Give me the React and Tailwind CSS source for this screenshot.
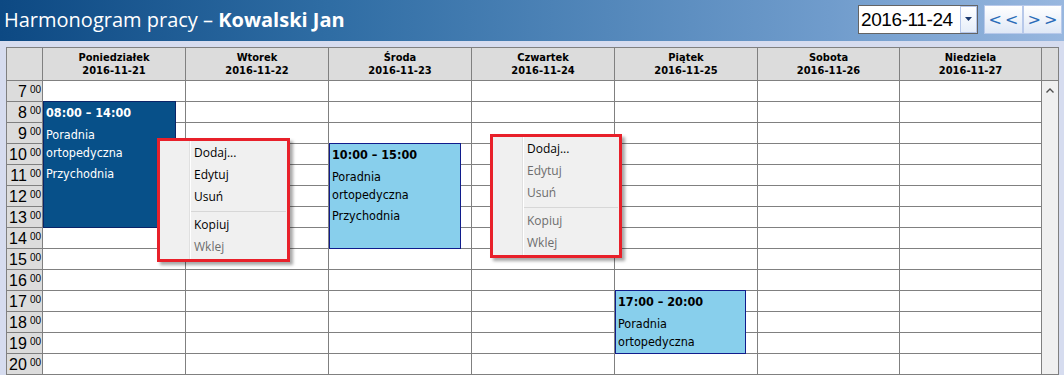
import React from "react";

const days = [
  ["Poniedziałek", "2016-11-21"],
  ["Wtorek", "2016-11-22"],
  ["Środa", "2016-11-23"],
  ["Czwartek", "2016-11-24"],
  ["Piątek", "2016-11-25"],
  ["Sobota", "2016-11-26"],
  ["Niedziela", "2016-11-27"],
];

const hours = [7, 8, 9, 10, 11, 12, 13, 14, 15, 16, 17, 18, 19, 20];

const events = {
  0: [{ start: 8, end: 14, time: "08:00 – 14:00", lines: ["Poradnia ortopedyczna", "Przychodnia"], dark: true, w: 133 }],
  2: [{ start: 10, end: 15, time: "10:00 – 15:00", lines: ["Poradnia ortopedyczna", "Przychodnia"], dark: false, w: 132 }],
  4: [{ start: 17, end: 20, time: "17:00 – 20:00", lines: ["Poradnia ortopedyczna"], dark: false, w: 131 }],
};

const tahoma = { fontFamily: "'DejaVu Sans Condensed', 'Liberation Sans', sans-serif" };

function Event({ ev }) {
  const top = (ev.start - 7) * 21 - 1;
  const height = (ev.end - ev.start) * 21 + 1;
  return (
    <div
      className={
        "absolute left-0 border px-[2px] pt-[3px] " +
        (ev.dark ? "bg-[#075089] border-[#0a2468] text-white" : "bg-[#88cfec] border-[#101c8c] text-black")
      }
      style={{ top, height, width: ev.w }}
    >
      <div className="text-[12.5px] font-bold leading-[16px]">{ev.time}</div>
      <div className="mt-[5px] text-[12.5px] leading-[18px] w-[110px]">{ev.lines[0]}</div>
      {ev.lines[1] && <div className="mt-[3px] text-[12.5px] leading-[18px]">{ev.lines[1]}</div>}
    </div>
  );
}

function Menu({ items, className }) {
  return (
    <div
      className={
        "absolute border-[3px] border-[#e8202a] bg-[#f0f0f0] shadow-[3px_3px_3px_rgba(0,0,0,0.35)] " + className
      }
      style={{ fontFamily: "'Open Sans', 'Noto Sans', sans-serif" }}
    >
      <div className="relative py-[1px]">
        <div className="absolute top-0 bottom-0 left-[29px] w-[2px] border-l border-[#e0e0e0] bg-white"></div>
        {items.map((it, i) =>
          it === "sep" ? (
            <div key={i} className="h-[6px] flex items-center pl-[29px] pr-[1px]">
              <div className="h-[1px] w-full bg-[#d7d7d7]"></div>
            </div>
          ) : (
            <div
              key={i}
              className={"h-[22px] flex items-center pl-[34px] text-[12px] " + (it.on ? "text-black" : "text-[#6d6d6d]")}
            >
              {it.label}
            </div>
          )
        )}
      </div>
    </div>
  );
}

export default function App() {
  return (
    <div className="w-[1064px] h-[375px] overflow-hidden bg-[#d6dcef] relative" style={tahoma}>
      {/* Title bar */}
      <div className="h-[41px] flex items-center justify-between bg-[linear-gradient(to_right,#0d4983_0%,#2f6da4_31%,#709ccc_78%,#98b7df_100%)]">
        <div
          className="pl-[4px] text-white text-[20px] leading-none mt-[-2px]"
          style={{ fontFamily: "'Open Sans', 'Noto Sans', sans-serif" }}
        >
          Harmonogram pracy – <span className="font-bold">Kowalski Jan</span>
        </div>
        <div className="flex items-start self-start mt-[5px] mr-[2px]">
          <div className="w-[120px] h-[29px] bg-white border border-[#646464] flex items-center">
            <div
              className="flex-1 pl-[2px] whitespace-nowrap text-[19px] tracking-[-0.4px] leading-none text-black"
              style={{ fontFamily: "'Liberation Sans', sans-serif" }}
            >
              2016-11-24
            </div>
            <div className="w-[17px] h-[27px] border border-[#b4c6ea] bg-[linear-gradient(to_bottom,#ffffff,#e6eef9)] flex items-center justify-center">
              <svg width="8" height="5" viewBox="0 0 8 5">
                <path d="M0 0 L7 0 L3.5 4 Z" fill="#1b3a6e" />
              </svg>
            </div>
          </div>
          <div className="ml-[6px] flex">
            {["<<", ">>"].map((t) => (
              <div
                key={t}
                className="w-[39px] h-[29px] border border-[#b8c9ea] bg-[linear-gradient(to_bottom,#ffffff,#dfe8f6)] flex items-center justify-center text-[#2a6cb8] text-[16px] tracking-[3px] pl-[3px]"
                style={{ fontFamily: "'DejaVu Sans', sans-serif" }}
              >
                {t}
              </div>
            ))}
          </div>
        </div>
      </div>

      {/* Calendar */}
      <div className="mt-[6px] ml-[6px] w-[1053px] bg-[#808080] p-px">
        <div className="grid grid-cols-[35px_142px_142px_142px_142px_142px_141px_141px_16px] gap-px">
          {/* header row */}
          <div className="h-[32px] bg-[#dcdcdc]"></div>
          {days.map(([d, date]) => (
            <div
              key={d}
              className="h-[32px] bg-[#dcdcdc] flex flex-col items-center justify-center text-[11px] font-bold leading-[13px] text-black"
            >
              <div>{d}</div>
              <div>{date}</div>
            </div>
          ))}
          <div className="h-[32px] bg-[#dcdcdc]"></div>

          {/* hour column */}
          <div className="flex flex-col gap-px">
            {hours.map((h) => (
              <div key={h} className="h-[20px] bg-[#dcdcdc] flex justify-end items-start pr-[1px] text-black">
                <span className="text-[16px] leading-none mt-[3px]" style={{ fontFamily: "'Liberation Sans', sans-serif" }}>
                  {h}
                </span>
                <span className="text-[10px] leading-none mt-[4px] ml-[3px]" style={{ fontFamily: "'Liberation Sans', sans-serif" }}>
                  00
                </span>
              </div>
            ))}
          </div>

          {/* day columns */}
          {days.map(([d], di) => (
            <div key={d} className="relative flex flex-col gap-px">
              {hours.map((h) => (
                <div key={h} className="h-[20px] bg-white"></div>
              ))}
              {(events[di] || []).map((ev, i) => (
                <Event key={i} ev={ev} />
              ))}
            </div>
          ))}

          {/* scrollbar */}
          <div className="bg-[#f0f0f0] flex justify-center pt-[7px]">
            <svg width="8" height="5" viewBox="0 0 8 5">
              <path d="M0.5 4.5 L4 1 L7.5 4.5" stroke="#505050" strokeWidth="1.4" fill="none" />
            </svg>
          </div>
        </div>
      </div>

      {/* Context menus */}
      <Menu
        className="left-[157px] top-[138px] w-[133px]"
        items={[
          { label: "Dodaj...", on: true },
          { label: "Edytuj", on: true },
          { label: "Usuń", on: true },
          "sep",
          { label: "Kopiuj", on: true },
          { label: "Wklej", on: false },
        ]}
      />
      <Menu
        className="left-[490px] top-[134px] w-[132px]"
        items={[
          { label: "Dodaj...", on: true },
          { label: "Edytuj", on: false },
          { label: "Usuń", on: false },
          "sep",
          { label: "Kopiuj", on: false },
          { label: "Wklej", on: false },
        ]}
      />
    </div>
  );
}
